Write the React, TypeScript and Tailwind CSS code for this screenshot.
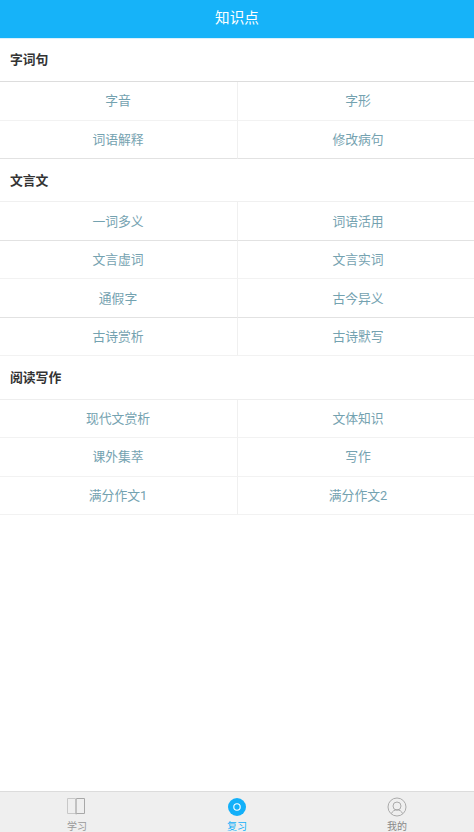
import React from 'react';

const sections = [
  { title: '字词句', items: ['字音', '字形', '词语解释', '修改病句'] },
  { title: '文言文', items: ['一词多义', '词语活用', '文言虚词', '文言实词', '通假字', '古今异义', '古诗赏析', '古诗默写'] },
  { title: '阅读写作', items: ['现代文赏析', '文体知识', '课外集萃', '写作', '满分作文1', '满分作文2'] },
];

const font = { fontFamily: '"Roboto", "Noto Sans CJK SC", sans-serif' };

function BookIcon() {
  return (
    <svg width="20" height="19" viewBox="0 0 20 19" fill="none" stroke="#b5b5b5" strokeWidth="1" className="-translate-x-[1px]">
      <path d="M1.500 1.500h7.500l1 .5v15l-1-.5H1.500z" stroke="#c8c8c8" />
      <path d="M18.500 1.500H11l-1 .5v15l1-.5h7.500z" stroke="#a8a8a8" />
    </svg>
  );
}

function UserIcon() {
  return (
    <svg width="20" height="20" viewBox="0 0 20 20" fill="none" stroke="#a3a3a3" strokeWidth="0.9">
      <circle cx="10" cy="10" r="9" />
      <circle cx="10" cy="9" r="4" />
      <path d="M4.500 16.500c1-2.600 3-3.600 5.500-3.600s4.500 1 5.500 3.600" />
    </svg>
  );
}

function ReviewIcon() {
  return (
    <svg width="18" height="20" viewBox="0 0 18 20" fill="none">
      <circle cx="9" cy="10" r="9" fill="#12b0f9" />
      <circle cx="9" cy="10" r="3.200" stroke="#ffffff" strokeWidth="1.100" />
    </svg>
  );
}

export default function App() {
  return (
    <div className="flex h-[832px] w-full flex-col overflow-hidden bg-white" style={font}>
      <header className="flex h-[39px] shrink-0 items-center justify-center border-b border-[#d9f1fd] bg-[#16b3f9] text-[14.6px] text-white">
        知识点
      </header>
      <main className="flex-1">
        {sections.map((s, si) => (
          <section key={s.title}>
            <h2 className={`flex items-center pl-[10px] text-[12.8px] font-bold text-[#333333] ${si === 0 ? 'h-[43px] border-b border-[#dddddd]' : si === 1 ? 'h-[43px] border-b border-[#f0f0f0] pt-[1px]' : 'h-[44px] border-b border-[#eeeeee]'}`}>
              {s.title}
            </h2>
            <div className="grid grid-cols-[238px_1fr]">
              {s.items.map((item, i) => {
                const row = Math.floor(i / 2);
                const last = row === Math.ceil(s.items.length / 2) - 1;
                const strong = si < 2 && (si === 0 ? last : row % 2 === 0 || row === 2);
                return (
                  <div
                    key={item}
                    className={`flex items-center justify-center border-b text-[12.8px] text-[#74a2b0] ${si === 2 ? 'h-[38.4px]' : 'h-[38.5px]'} ${i % 2 === 0 ? 'border-r border-r-[#f0f0f0] pr-[1px]' : 'pl-[4px]'} ${strong ? 'border-b-[#e2e2e2]' : 'border-b-[#f2f2f2]'} ${si === 1 ? 'pt-[1px]' : ''}`}
                  >
                    {item}
                  </div>
                );
              })}
            </div>
          </section>
        ))}
      </main>
      <nav className="grid h-[41px] shrink-0 grid-cols-[154px_1fr_154px] border-t border-[#dcdcdc] bg-[#efefef]">
        <div className="flex flex-col items-center pt-[5px] text-[10px] leading-[14px] text-[#999999]">
          <BookIcon />
          <span className="mt-[4px]">学习</span>
        </div>
        <div className="flex flex-col items-center pt-[5px] text-[10px] leading-[14px] text-[#12b0f9]">
          <ReviewIcon />
          <span className="mt-[3px]">复习</span>
        </div>
        <div className="flex flex-col items-center pt-[5px] text-[10px] leading-[14px] text-[#888888]">
          <UserIcon />
          <span className="mt-[3px]">我的</span>
        </div>
      </nav>
    </div>
  );
}
